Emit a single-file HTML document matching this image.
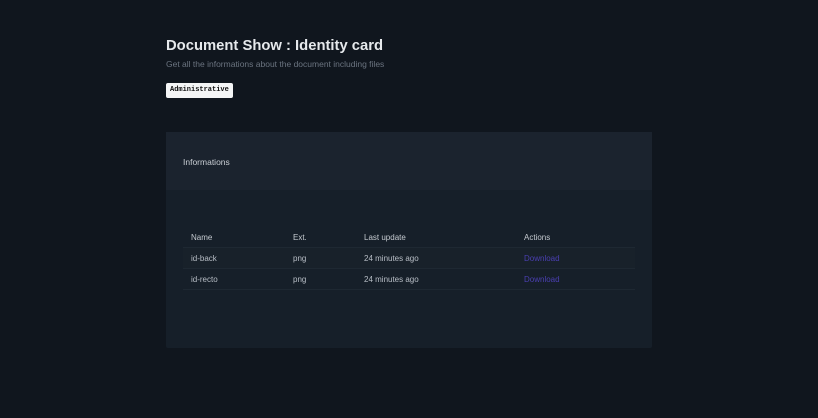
<!DOCTYPE html>
<html><head><meta charset="utf-8"><style>
body{margin:0;width:818px;height:418px;background:#10161e;font-family:"Liberation Sans",sans-serif;overflow:hidden;position:relative}
h1{position:absolute;left:166px;top:38px;margin:0;font-size:14.8px;font-weight:bold;color:#e6e9ec}
.sub{position:absolute;left:166px;top:59px;font-size:8.5px;color:#6b7480}
.tag{position:absolute;left:166px;top:83px;height:15px;line-height:15px;padding:0 4px;background:#f4f5f6;color:#111;border-radius:2px;font-family:"Liberation Mono",monospace;font-size:7px;font-weight:bold}
.card{position:absolute;left:166px;top:132px;width:486px;height:216px;background:#161f29;border-radius:2px}
.ch{height:58px;background:#1b232e;color:#c9ced4;font-size:8.5px;line-height:60px;padding-left:17px}
.t{position:absolute;left:17px;top:97px;width:452px;font-size:8px;color:#b8bec6}
.r{position:relative;height:20px;line-height:22px;border-bottom:1px solid #1e2832}
.r span{position:absolute;left:8px}
.r span:nth-child(2){left:110px}.r span:nth-child(3){left:181px}.r span:nth-child(4){left:341px}
.h{height:18px;line-height:17px;color:#c4c9cf}
.a{background:#18212a}
.d{color:#4a3fb0}
</style></head><body>
<h1>Document Show : Identity card</h1>
<div class="sub">Get all the informations about the document including files</div>
<div class="tag">Administrative</div>
<div class="card"><div class="ch">Informations</div>
<div class="t">
<div class="r h"><span>Name</span><span>Ext.</span><span>Last update</span><span>Actions</span></div>
<div class="r a"><span>id-back</span><span>png</span><span>24 minutes ago</span><span class="d">Download</span></div>
<div class="r"><span>id-recto</span><span>png</span><span>24 minutes ago</span><span class="d">Download</span></div>
</div></div>
</body></html>
